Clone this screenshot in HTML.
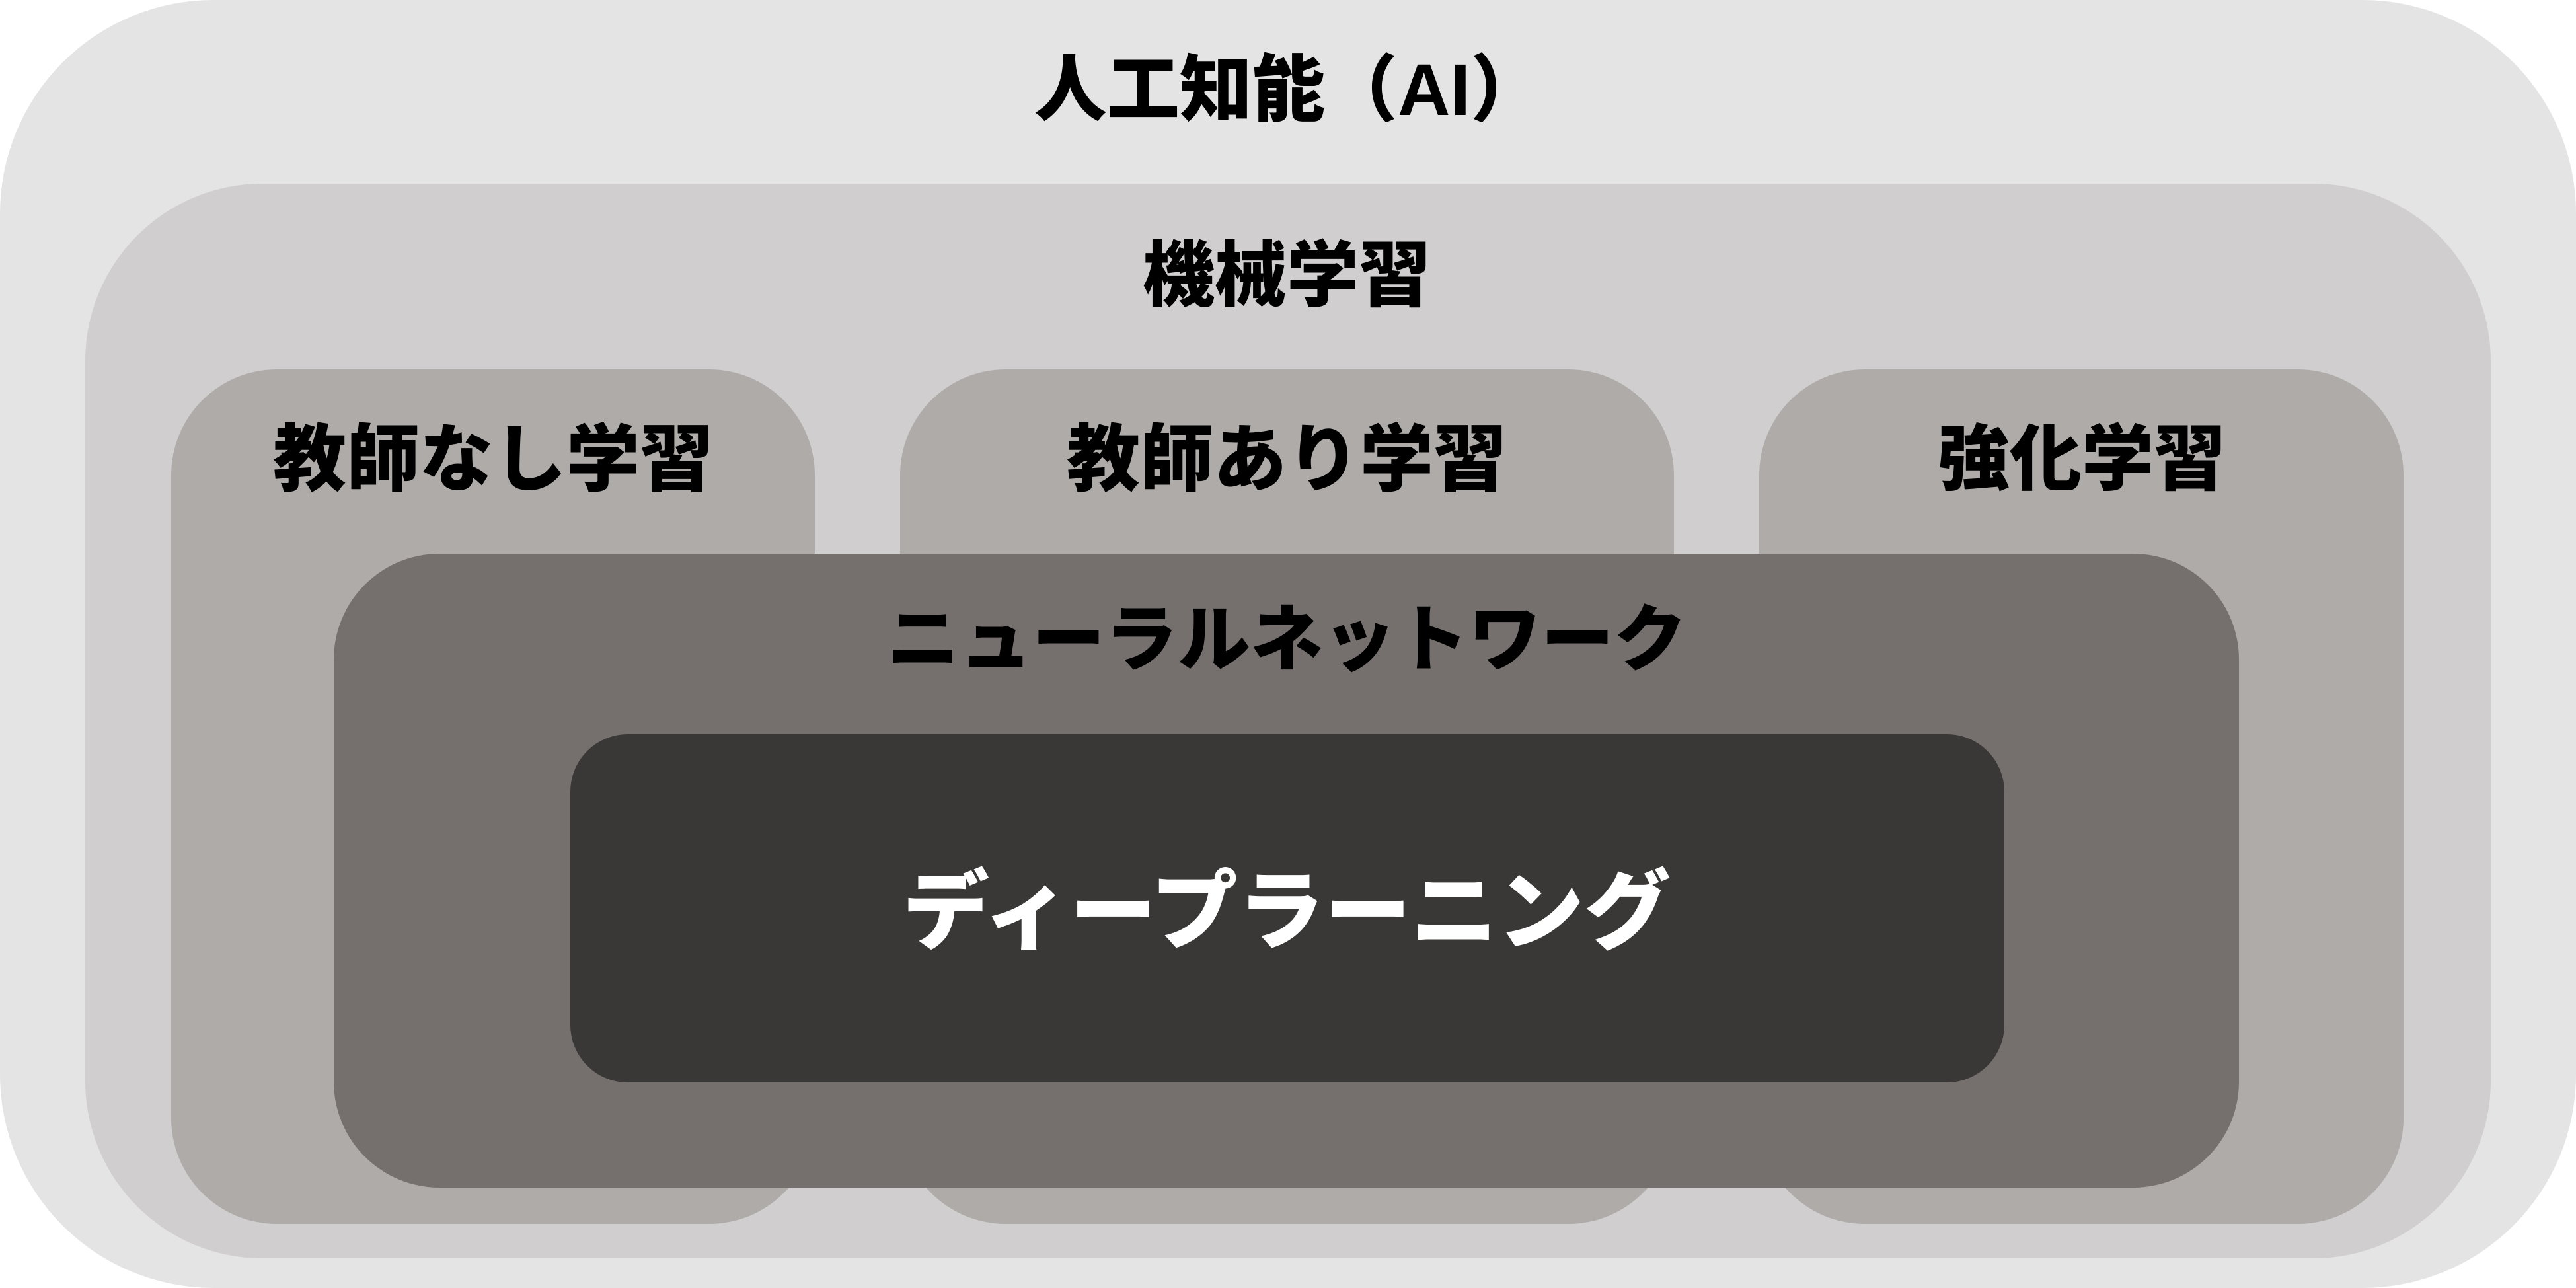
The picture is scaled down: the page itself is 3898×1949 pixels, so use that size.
<!DOCTYPE html>
<html><head><meta charset="utf-8"><style>
html,body{margin:0;padding:0;width:3898px;height:1949px;background:#fff;overflow:hidden}
div{position:absolute;box-sizing:border-box}
.t{font-family:"Liberation Sans","Noto Sans CJK JP",sans-serif;font-weight:900;color:#000;white-space:nowrap;transform:translate(-50%,-50%);line-height:1}
</style></head><body>
<div style="left:0;top:0;width:3898px;height:1949px;background:#e5e4e4;border-radius:323px"></div>
<div style="left:129px;top:278px;width:3640px;height:1626px;background:#d0cecf;border-radius:268px"></div>
<div style="left:259px;top:559px;width:974px;height:1293px;background:#afaba9;border-radius:160px"></div>
<div style="left:1362px;top:559px;width:1171px;height:1293px;background:#afaba9;border-radius:160px"></div>
<div style="left:2662px;top:559px;width:975px;height:1293px;background:#afaba9;border-radius:160px"></div>
<div style="left:505px;top:838px;width:2883px;height:959px;background:#75706e;border-radius:160px"></div>
<div style="left:863px;top:1111px;width:2170px;height:527px;background:#3a3837;border-radius:87px"></div>
<div class="t" style="left:1950px;top:137px;font-size:110px">人工知能（AI）</div>
<div class="t" style="left:1947px;top:418px;font-size:109px">機械学習</div>
<div class="t" style="left:746px;top:696px;font-size:111px">教師なし学習</div>
<div class="t" style="left:1947px;top:696px;font-size:111px">教師あり学習</div>
<div class="t" style="left:3150px;top:696px;font-size:109px">強化学習</div>
<div class="t" style="left:1947px;top:969px;font-size:110px">ニューラルネットワーク</div>
<div class="t" style="left:1947px;top:1380px;font-size:131px;color:#fff">ディープラーニング</div>
</body></html>
